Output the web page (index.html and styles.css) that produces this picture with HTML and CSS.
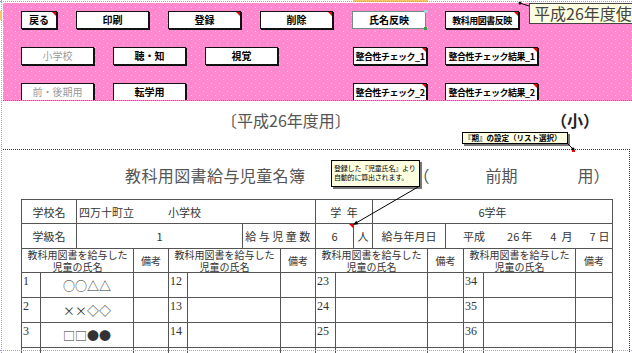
FILE: index.html
```html
<!DOCTYPE html>
<html lang="ja">
<head>
    <meta charset="UTF-8">
    <meta name="viewport" content="width=device-width, initial-scale=1.0">
    <title>教科用図書給与児童名簿</title>
    <link rel="stylesheet" href="styles.css">
</head>
<body>
<div class="page">
    <!-- Control Panel -->
    <div class="toolbar">
        <div class="btn-row">
            <button class="btn btn-short mark">戻る</button>
            <button class="btn">印刷</button>
            <button class="btn mark">登録</button>
            <button class="btn mark">削除</button>
            <button class="btn btn-wide selected">氏名反映</button>
            <button class="btn btn-wide btn-small mark">教科用図書反映</button>
        </div>
        <div class="btn-row split">
            <div class="btn-group">
                <button class="btn disabled">小学校</button>
                <button class="btn">聴・知</button>
                <button class="btn">視覚</button>
            </div>
            <div class="btn-group right">
                <button class="btn btn-wide btn-small mark">整合性チェック_1</button>
                <button class="btn btn-long btn-small mark">整合性チェック結果_1</button>
            </div>
        </div>
        <div class="btn-row split">
            <div class="btn-group">
                <button class="btn disabled">前・後期用</button>
                <button class="btn">転学用</button>
            </div>
            <div class="btn-group right">
                <button class="btn btn-wide btn-small mark">整合性チェック_2</button>
                <button class="btn btn-long btn-small mark">整合性チェック結果_2</button>
            </div>
        </div>
    </div>

    <!-- Year -->
    <div class="year-row">
        <span class="year">〔平成26年度用〕</span>
        <span class="grade">（小）</span>
    </div>

    <!-- Sheet -->
    <div class="sheet">
        <div class="title-row">
            <span class="title">教科用図書給与児童名簿</span>
            <span class="term-open">（</span>
            <span class="term">前期</span>
            <span class="term-close">用）</span>
        </div>
        <table class="roster">
            <colgroup>
                <col class="w19"><col class="w36"><col class="w57"><col class="w35">
                <col class="w19"><col class="w55"><col class="w38"><col class="w35">
                <col class="w20"><col class="w18"><col class="w19"><col class="w55"><col class="w18">
                <col class="w18"><col class="w20"><col class="w92"><col class="w37">
            </colgroup>
            <tr class="row-24">
                <td colspan="2">学校名</td>
                <td colspan="6" class="left">四万十町立<span class="school-type">小学校</span></td>
                <td colspan="3" class="grade-label">学 年</td>
                <td colspan="6">6学年</td>
            </tr>
            <tr class="row-25">
                <td colspan="2">学級名</td>
                <td colspan="4">1</td>
                <td colspan="2" class="spread">給与児童数</td>
                <td colspan="2">6</td>
                <td>人</td>
                <td colspan="2">給与年月日</td>
                <td colspan="4" class="left date">平成<span class="dy">26</span>年<span class="dm">4</span>月<span class="dd">7</span>日</td>
            </tr>
            <tr class="row-24">
                <td colspan="3" class="head">教科用図書を給与した<br>児童の氏名</td>
                <td class="head">備考</td>
                <td colspan="3" class="head">教科用図書を給与した<br>児童の氏名</td>
                <td class="head">備考</td>
                <td colspan="4" class="head">教科用図書を給与した<br>児童の氏名</td>
                <td colspan="2" class="head">備考</td>
                <td colspan="2" class="head">教科用図書を給与した<br>児童の氏名</td>
                <td class="head">備考</td>
            </tr>
            <tr class="row-25">
                <td class="num">1</td><td colspan="2" class="name">○○△△</td><td></td>
                <td class="num">12</td><td colspan="2"></td><td></td>
                <td class="num">23</td><td colspan="3"></td><td colspan="2"></td>
                <td class="num">34</td><td></td><td></td>
            </tr>
            <tr class="row-25">
                <td class="num">2</td><td colspan="2" class="name">××◇◇</td><td></td>
                <td class="num">13</td><td colspan="2"></td><td></td>
                <td class="num">24</td><td colspan="3"></td><td colspan="2"></td>
                <td class="num">35</td><td></td><td></td>
            </tr>
            <tr class="row-25">
                <td class="num">3</td><td colspan="2" class="name">□□●●</td><td></td>
                <td class="num">14</td><td colspan="2"></td><td></td>
                <td class="num">25</td><td colspan="3"></td><td colspan="2"></td>
                <td class="num">36</td><td></td><td></td>
            </tr>
            <tr class="row-25">
                <td></td><td colspan="2"></td><td></td>
                <td></td><td colspan="2"></td><td></td>
                <td></td><td colspan="3"></td><td colspan="2"></td>
                <td></td><td></td><td></td>
            </tr>
        </table>
    </div>

    <!-- Comments -->
    <div class="tip-year">平成26年度使用</div>
    <div class="note note-term">『期』の設定（リスト選択）</div>
    <div class="note note-auto">登録した『児童氏名』より<br>自動的に算出されます。</div>

    <svg class="leaders" width="632" height="353">
        <rect x="353" y="0" width="75" height="2" fill="#f6c46a"/>
        <rect x="0" y="11" width="2" height="9" fill="#f6c46a"/>
        <line x1="520" y1="3" x2="529" y2="6" stroke="#000"/>
        <circle cx="520" cy="3" r="1.5" fill="#000"/>
        <line x1="567" y1="143" x2="573" y2="149" stroke="#000"/>
        <circle cx="573" cy="149" r="1.6" fill="#000"/>
        <rect x="572" y="150" width="3" height="2" fill="#e00"/>
        <line x1="418" y1="187" x2="356" y2="223" stroke="#000"/>
        <polygon points="353,225 358.3,224.2 356.3,220.8" fill="#000"/>
        <polygon points="349,224 353,224 353,228" fill="#e00"/>
    </svg>
    <div class="page-break"></div>
</div>
</body>
</html>
```

FILE: styles.css
```css
html, body {
    margin: 0;
    padding: 0;
    overflow: hidden;
}
body {
    font-family: "Noto Sans CJK JP", sans-serif;
    background-color: #fff;
    color: #333;
}
.page {
    position: relative;
    height: 353px;
    padding: 3px 0 0 3px;
    box-sizing: border-box;
    overflow: hidden;
}
/* page break guides */
.page::before {
    content: "";
    position: absolute;
    left: 1px;
    top: 0;
    bottom: 0;
    border-left: 1px dotted #8da3e6;
}
.page::after {
    content: "";
    position: absolute;
    left: 0;
    right: 0;
    top: 1px;
    border-top: 1px dotted #8da3e6;
}
.page-break {
    position: absolute;
    left: 0;
    right: 0;
    top: 350px;
    border-top: 1px dotted #8da3e6;
}
/* Control Panel */
.toolbar {
    height: 98px;
    box-sizing: border-box;
    padding: 8px 0 0 18px;
    display: flex;
    flex-direction: column;
    gap: 18px;
    overflow: hidden;
    border-bottom: 1px dotted #777;
    background-color: #ff88cf;
    background-image:
        conic-gradient(at 1px 1px, transparent 75%, #ffc8ea 0),
        conic-gradient(at 1px 1px, transparent 75%, #ffc8ea 0);
    background-size: 8px 8px;
    background-position: 0 0, 4px 4px;
}
.btn-row {
    display: flex;
    gap: 19px;
    height: 18px;
    flex-shrink: 0;
}
.btn-row.split {
    display: grid;
    grid-template-columns: 332px auto;
    gap: 0;
}
.btn-group {
    display: flex;
    gap: 19px;
}
.btn-group.right {
    gap: 18px;
}
.btn {
    position: relative;
    width: 73px;
    height: 18px;
    box-sizing: border-box;
    margin: 0;
    padding: 0;
    border: 1px solid #111;
    box-shadow: 1px 1px 0 #111;
    background: #fff;
    color: #000;
    font-family: "Noto Sans CJK JP", sans-serif;
    font-size: 10px;
    font-weight: bold;
    line-height: 1;
    white-space: nowrap;
    display: flex;
    align-items: center;
    justify-content: center;
}
.btn-short {
    width: 36px;
}
.btn-wide {
    width: 74px;
}
.btn-long {
    width: 93px;
}
.btn-small {
    font-size: 9px;
    letter-spacing: -0.5px;
}
.btn.disabled {
    color: #9a9a9a;
    font-weight: normal;
}
.btn.mark::after {
    content: "";
    position: absolute;
    top: 0;
    right: 0;
    border-top: 4px solid #e00;
    border-left: 4px solid transparent;
}
.btn.selected {
    border-color: #6f8f80;
    box-shadow: none;
}
.btn.selected::before {
    content: "";
    position: absolute;
    right: -2px;
    bottom: -2px;
    width: 3px;
    height: 3px;
    background: #3a9a4a;
}
.btn.selected::after {
    content: "";
    position: absolute;
    right: -2px;
    top: -2px;
    width: 3px;
    height: 3px;
    background: #9cd8e0;
}
/* Year */
.year-row {
    display: flex;
    height: 48px;
    box-sizing: border-box;
    padding: 9px 33px 0 218px;
    line-height: 20px;
}
.year {
    font-size: 16px;
    color: #555;
}
.grade {
    margin-left: auto;
    font-size: 16px;
    font-weight: bold;
    color: #222;
}
/* Sheet */
.sheet {
    margin-right: 2px;
    height: 260px;
    border-top: 1px dotted #333;
    border-right: 1px dotted #333;
}
.title-row {
    display: flex;
    height: 49px;
    box-sizing: border-box;
    padding: 14px 0 0 122px;
    line-height: 22px;
    font-size: 16px;
    color: #555;
}
.title {
    letter-spacing: 0.4px;
}
.term-open {
    margin-left: 108px;
}
.term {
    margin-left: 56px;
}
.term-close {
    margin-left: 60px;
}
/* Roster */
.roster {
    margin-left: 18px;
    width: 591px;
    table-layout: fixed;
    border-collapse: collapse;
    font-size: 11px;
    color: #333;
}
.roster td {
    border: 1px solid #555;
    padding: 0;
    text-align: center;
    vertical-align: middle;
    white-space: nowrap;
    overflow: hidden;
}
.w18 { width: 18px; }
.w19 { width: 19px; }
.w20 { width: 20px; }
.w35 { width: 35px; }
.w36 { width: 36px; }
.w37 { width: 37px; }
.w38 { width: 38px; }
.w55 { width: 55px; }
.w57 { width: 57px; }
.w92 { width: 92px; }
.row-24 {
    height: 24px;
}
.row-25 {
    height: 25px;
}
.roster td.left {
    text-align: left;
    padding-left: 2px;
}
.school-type {
    margin-left: 34px;
}
.grade-label {
    word-spacing: 3px;
}
.spread {
    letter-spacing: 2.5px;
}
.roster td.date {
    padding-left: 17px;
}
.dy {
    margin: 0 2px 0 22px;
}
.dm {
    margin: 0 5px 0 18px;
}
.dd {
    margin: 0 3px 0 17px;
}
.roster td.head {
    font-size: 10px;
    line-height: 11.5px;
}
.roster td.num {
    text-align: left;
    vertical-align: top;
    padding: 1px 0 0 1px;
    font-family: "Liberation Serif", serif;
    font-size: 12px;
    line-height: 14px;
}
.roster td.name {
    font-size: 12px;
}
/* Comments */
.tip-year {
    position: absolute;
    left: 529px;
    top: 3px;
    width: 120px;
    height: 21px;
    box-sizing: border-box;
    padding-left: 4px;
    background: #ffffe1;
    border: 1px solid #444;
    font-size: 16px;
    line-height: 19px;
    color: #444;
    white-space: nowrap;
}
.note {
    position: absolute;
    box-sizing: border-box;
    background: #ffffe1;
    border: 1px solid #000;
    box-shadow: 2px 2px 0 #777;
    color: #000;
    font-size: 7px;
    line-height: 9px;
    white-space: nowrap;
    overflow: hidden;
}
.note-term {
    left: 462px;
    top: 132px;
    width: 106px;
    height: 12px;
    padding-left: 1px;
    font-size: 7.5px;
    font-weight: bold;
    line-height: 10px;
}
.note-auto {
    left: 331px;
    top: 160px;
    width: 89px;
    height: 27px;
    padding: 3px 0 0 2px;
    letter-spacing: -0.2px;
}
.leaders {
    position: absolute;
    left: 0;
    top: 0;
    pointer-events: none;
}
```
